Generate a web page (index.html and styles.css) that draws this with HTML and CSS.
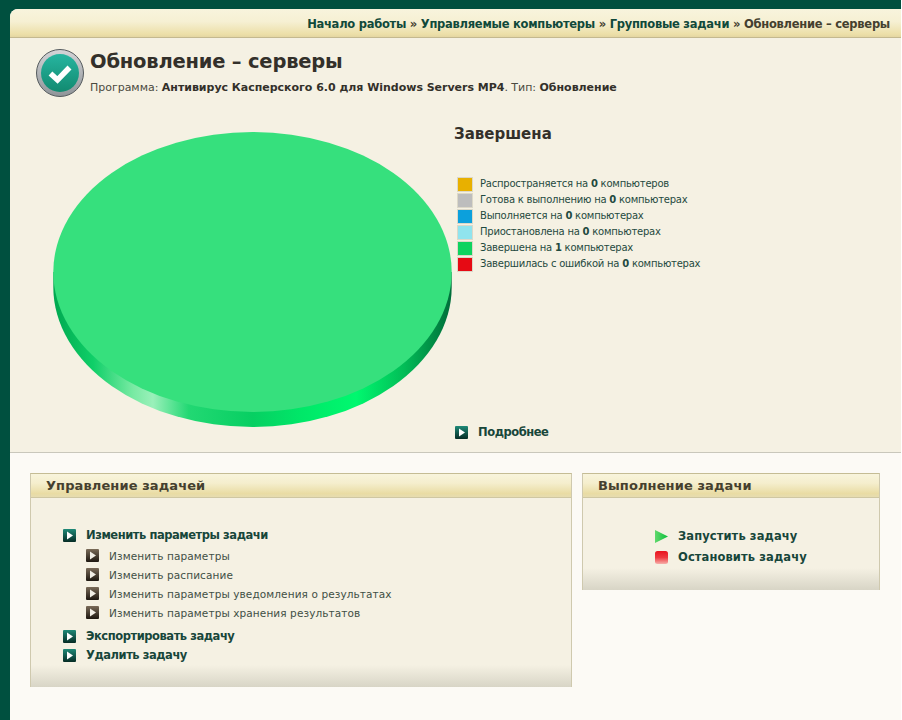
FILE: index.html
```html
<!DOCTYPE html>
<html lang="ru">
<head>
<meta charset="utf-8">
<title>Обновление – серверы</title>
<link rel="stylesheet" href="styles.css">
</head>
<body>
<svg class="defs" width="0" height="0" aria-hidden="true">
  <defs>
    <linearGradient id="gTeal" x1="0" y1="0" x2="0" y2="1"><stop offset="0" stop-color="#1f8a78"/><stop offset="1" stop-color="#062c25"/></linearGradient>
    <linearGradient id="gBrown" x1="0" y1="0" x2="0" y2="1"><stop offset="0" stop-color="#7a6b58"/><stop offset="1" stop-color="#1d1710"/></linearGradient>
    <linearGradient id="gPlay" x1="0" y1="0" x2="1" y2="0"><stop offset="0" stop-color="#60d86c"/><stop offset="1" stop-color="#0cc03c"/></linearGradient>
    <linearGradient id="gStop" x1="0" y1="0" x2="0" y2="1"><stop offset="0" stop-color="#e8141e"/><stop offset="0.5" stop-color="#ee3a40"/><stop offset="1" stop-color="#f7b0aa"/></linearGradient>
    <linearGradient id="gBadge" x1="0" y1="0" x2="0" y2="1"><stop offset="0" stop-color="#26b5a0"/><stop offset="1" stop-color="#128a70"/></linearGradient>
    <linearGradient id="gRing" x1="0" y1="0" x2="0" y2="1"><stop offset="0" stop-color="#d5d5d8"/><stop offset="1" stop-color="#8f9498"/></linearGradient>
    <linearGradient id="gSide" x1="0" y1="0" x2="1" y2="0">
      <stop offset="0" stop-color="#00a850"/><stop offset="0.1" stop-color="#0fcf68"/><stop offset="0.2" stop-color="#78eaa3"/><stop offset="0.25" stop-color="#9af0ba"/><stop offset="0.34" stop-color="#22d873"/><stop offset="0.5" stop-color="#07cf62"/><stop offset="0.62" stop-color="#00e768"/><stop offset="0.76" stop-color="#00f86f"/><stop offset="0.88" stop-color="#02bd57"/><stop offset="1" stop-color="#006d3a"/>
    </linearGradient>
    <g id="bullet-teal"><rect width="13" height="13" rx="1" fill="url(#gTeal)"/><path d="M4 2.5 10 6.5 4 10.5Z" fill="#fff"/></g>
    <g id="bullet-brown"><rect width="13" height="13" rx="1" fill="url(#gBrown)"/><path d="M4 2.5 10 6.5 4 10.5Z" fill="#f2efe6"/></g>
  </defs>
</svg>
<div class="page">
  <nav class="crumbs">
    <a>Начало работы</a> <span class="sep">»</span> <a>Управляемые компьютеры</a> <span class="sep">»</span> <a>Групповые задачи</a> <span class="sep">»</span> <span class="cur">Обновление – серверы</span>
  </nav>
  <section class="top">
    <header class="head">
      <svg class="badge" width="48" height="48" viewBox="0 0 48 48">
        <circle cx="24" cy="24" r="23.5" fill="url(#gRing)" stroke="#555b5e"/>
        <circle cx="24" cy="24" r="19" fill="url(#gBadge)"/>
        <path d="M14.5 24.5 21.5 31 33.5 18.5" fill="none" stroke="#fff" stroke-width="5.5"/>
      </svg>
      <div>
        <h1 class="title">Обновление – серверы</h1>
        <p class="sub">Программа: <b>Антивирус Касперского 6.0 для Windows Servers MP4</b>. Тип: <b>Обновление</b></p>
      </div>
    </header>
    <div class="chart">
      <svg class="pie" width="400" height="296" viewBox="0 0 400 296">
        <path d="M0.3 140V155A199.2 140 0 0 0 398.7 155V140Z" fill="url(#gSide)"/>
        <ellipse cx="199.5" cy="140" rx="199.2" ry="140" fill="#36e07d"/>
      </svg>
      <div class="info">
        <h2 class="status">Завершена</h2>
        <ul class="legend">
          <li><i class="sw sw-a"></i><span>Распространяется на <b>0</b> компьютеров</span></li>
          <li><i class="sw sw-b"></i><span>Готова к выполнению на <b>0</b> компьютерах</span></li>
          <li><i class="sw sw-c"></i><span>Выполняется на <b>0</b> компьютерах</span></li>
          <li><i class="sw sw-d"></i><span>Приостановлена на <b>0</b> компьютерах</span></li>
          <li><i class="sw sw-e"></i><span>Завершена на <b>1</b> компьютерах</span></li>
          <li><i class="sw sw-f"></i><span>Завершилась с ошибкой на <b>0</b> компьютерах</span></li>
        </ul>
        <a class="item more"><svg width="13" height="13"><use href="#bullet-teal"/></svg>Подробнее</a>
      </div>
    </div>
  </section>
  <section class="panels">
    <article class="panel panel-l">
      <h3 class="panel-h">Управление задачей</h3>
      <div class="panel-b body-l">
        <a class="item"><svg width="13" height="13"><use href="#bullet-teal"/></svg>Изменить параметры задачи</a>
        <ul class="subs">
          <li><svg width="13" height="13"><use href="#bullet-brown"/></svg>Изменить параметры</li>
          <li><svg width="13" height="13"><use href="#bullet-brown"/></svg>Изменить расписание</li>
          <li><svg width="13" height="13"><use href="#bullet-brown"/></svg>Изменить параметры уведомления о результатах</li>
          <li><svg width="13" height="13"><use href="#bullet-brown"/></svg>Изменить параметры хранения результатов</li>
        </ul>
        <a class="item"><svg width="13" height="13"><use href="#bullet-teal"/></svg>Экспортировать задачу</a>
        <a class="item"><svg width="13" height="13"><use href="#bullet-teal"/></svg>Удалить задачу</a>
      </div>
    </article>
    <article class="panel panel-r">
      <h3 class="panel-h">Выполнение задачи</h3>
      <div class="panel-b body-r">
        <a class="item"><svg width="13" height="13"><path d="M0 0 13 6.5 0 13Z" fill="url(#gPlay)"/></svg>Запустить задачу</a>
        <a class="item"><svg width="13" height="13"><rect width="13" height="13" rx="2.5" fill="url(#gStop)"/></svg>Остановить задачу</a>
      </div>
    </article>
  </section>
</div>
</body>
</html>
```
FILE: styles.css
```css
* { box-sizing: border-box; }
html { background: #fff; }
html, body { height: 720px; overflow: hidden; }
body { margin: 0 1px 0 0; background: #00503f; font-family: "DejaVu Sans", Verdana, sans-serif; color: #1f4a40; }
.defs { position: absolute; }
ul { list-style: none; margin: 0; padding: 0; }
h1, h2, h3, p { margin: 0; }
.page { margin: 0 0 0 10px; position: relative; top: 9px; height: 711px; background: #fcfaf5; border-top-left-radius: 8px; overflow: hidden; }
.crumbs { height: 29px; padding: 8px 11px 0 0; text-align: right; font-size: 11.5px; line-height: 15px; font-weight: bold; letter-spacing: -0.26px; color: #44402f; background: linear-gradient(#f8f4dd 0, #f6f0d3 45%, #ecdfa8 90%, #e4d6a2 100%); border-bottom: 1px solid #c4b98f; }
.crumbs a { color: #10493a; }
.top { height: 415px; background: #f5f1e3; border-bottom: 1px solid #c9c7bb; }
.head { display: flex; gap: 6px; padding: 12px 0 0 26px; height: 94px; }
.badge { flex: none; margin-top: -1px; }
.title { font-size: 19.5px; line-height: 24px; font-weight: bold; color: #33302a; letter-spacing: -0.2px; }
.sub { font-size: 11px; line-height: 16px; margin-top: 6px; color: #4b4a40; letter-spacing: -0.02px; }
.sub b { color: #33302a; }
.chart { display: flex; gap: 1px; padding-left: 43px; }
.pie { flex: none; }
.info { width: 300px; }
.status { font-size: 15px; line-height: 20px; font-weight: bold; color: #33302a; margin-top: -8px; }
.legend { margin: 32px 0 0 3px; font-size: 10px; line-height: 16px; letter-spacing: -0.23px; }
.legend li { display: flex; align-items: center; gap: 7px; height: 16px; }
.sw { width: 16px; height: 15px; flex: none; border: 1px solid #dcd8c8; }
.sw-a { background: #e8b000; }
.sw-b { background: #bdbdbd; }
.sw-c { background: #0ca0dc; }
.sw-d { background: #90e4ee; }
.sw-e { background: #0ed35f; }
.sw-f { background: #e60a14; }
.item { display: flex; align-items: center; gap: 10px; font-size: 11.5px; line-height: 19px; font-weight: bold; color: #17463a; letter-spacing: -0.45px; }
.more { margin: 151px 0 0 1px; }
.panels { display: flex; align-items: flex-start; gap: 10px; padding: 20px 0 0 20px; }
.panel { background: linear-gradient(#f5f1e3 0, #f5f1e3 calc(100% - 22px), #d8d5c6 100%); border: 1px solid #cfc9ae; border-top-color: #c5bc94; border-bottom: 0; }
.panel-l { width: 542px; height: 214px; }
.panel-r { width: 298px; height: 117px; }
.panel-h { height: 24px; padding: 3px 0 0 15px; font-size: 13px; line-height: 17px; font-weight: bold; letter-spacing: 0.1px; color: #45402f; background: linear-gradient(#f8f4dc 0, #f5eecd 40%, #e9dca4 85%, #e6dcb0 100%); border-bottom: 1px solid #cfc7a2; }
.body-l { padding: 28px 0 0 32px; }
.subs { margin: 1px 0 5px 23px; font-size: 10.5px; color: #3f4f45; letter-spacing: 0.1px; }
.subs li { display: flex; align-items: center; gap: 10px; height: 19px; }
.body-r { padding: 28px 0 0 72px; }
.body-r .item { line-height: 21px; letter-spacing: 0.1px; }
```
